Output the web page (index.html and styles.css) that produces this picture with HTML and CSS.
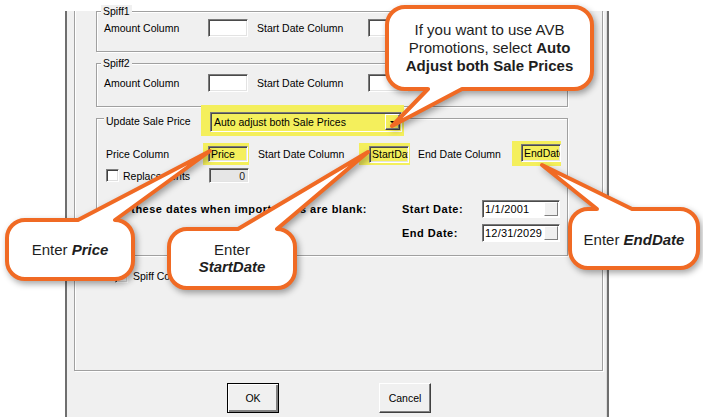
FILE: index.html
```html
<!DOCTYPE html>
<html lang="en">
<head>
  <meta charset="UTF-8" />
  <title>Import Settings</title>
  <link rel="stylesheet" href="styles.css">
</head>
<body>
  <div class="dialog">
    <div class="frame">
      <div class="group spiff1">
        <div class="legend">Spiff1</div>
        <div class="row">
          <span class="lbl lbl-amount">Amount Column</span>
          <span class="field"></span>
          <span class="lbl lbl-sdc">Start Date Column</span>
          <span class="field"></span>
        </div>
      </div>

      <div class="group spiff2">
        <div class="legend">Spiff2</div>
        <div class="row">
          <span class="lbl lbl-amount">Amount Column</span>
          <span class="field"></span>
          <span class="lbl lbl-sdc">Start Date Column</span>
          <span class="field"></span>
        </div>
      </div>

      <div class="group update">
        <div class="head">
          <div class="legend">Update Sale Price</div>
          <div class="hl hl-combo">
            <div class="combo">
              <span class="combo-text">Auto adjust both Sale Prices</span>
              <span class="combo-btn"><span class="arrow"></span></span>
            </div>
          </div>
        </div>

        <div class="row row2">
          <span class="lbl lbl-price">Price Column</span>
          <div class="hl hl-price"><span class="field in-hl f16">Price</span></div>
          <span class="lbl lbl-start">Start Date Column</span>
          <div class="hl hl-start"><span class="field in-hl f17">StartDate</span></div>
          <span class="lbl lbl-end">End Date Column</span>
          <div class="hl hl-end"><span class="field in-hl">EndDate</span></div>
        </div>

        <div class="row row3">
          <span class="check"></span>
          <span class="lbl lbl-repl">Replacements</span>
          <span class="field field-off">0</span>
        </div>

        <div class="dates">
          <span>Use these dates when import dates are blank:</span>
          <span>Start Date:</span>
          <div class="date"><span>1/1/2001</span><span class="pick"></span></div>
          <span></span>
          <span>End Date:</span>
          <div class="date"><span>12/31/2029</span><span class="pick"></span></div>
        </div>
      </div>

      <div class="row spiffcol">
        <span class="check"></span>
        <span class="lbl">Spiff Columns</span>
      </div>
    </div>

    <div class="buttons">
      <button class="btn btn-default">OK</button>
      <button class="btn">Cancel</button>
    </div>
  </div>

  <!-- callouts drawn over the screenshot -->
  <div class="notes">
    <svg width="703" height="417" viewBox="0 0 703 417">
      <g class="bubble">
        <path d="M405,7 H574 A18,18 0 0 1 592,25 V71 A18,18 0 0 1 574,89 H462 L392,126 L428,89 H405 A18,18 0 0 1 387,71 V25 A18,18 0 0 1 405,7 Z" />
        <path d="M25,220 H78 L210,151 L115,220 A18,18 0 0 1 133,238 V261 A18,18 0 0 1 115,279 H25 A18,18 0 0 1 7,261 V238 A18,18 0 0 1 25,220 Z" />
        <path d="M187,229 H238 L368,152 L277,229 A18,18 0 0 1 295,247 V270 A18,18 0 0 1 277,288 H187 A18,18 0 0 1 169,270 V247 A18,18 0 0 1 187,229 Z" />
        <path d="M588,209 H597 L542,165 L632,209 H680 A18,18 0 0 1 698,227 V250 A18,18 0 0 1 680,268 H588 A18,18 0 0 1 570,250 V227 A18,18 0 0 1 588,209 Z" />
      </g>
    </svg>
    <div class="note note-avb">If you want to use AVB<br>Promotions, select <b>Auto<br>Adjust both Sale Prices</b></div>
    <div class="note note-price">Enter <b><i>Price</i></b></div>
    <div class="note note-start">Enter<br><b><i>StartDate</i></b></div>
    <div class="note note-end">Enter <b><i>EndDate</i></b></div>
  </div>
</body>
</html>
```

FILE: styles.css
```css
html, body {
  margin: 0;
  padding: 0;
  width: 100%;
  height: 100%;
  overflow: hidden;
  background: #fff;
  font-family: "Liberation Sans", Arial, sans-serif;
  font-size: 10.5px;
  color: #000;
}
body { position: relative; }
* { box-sizing: border-box; }

/* dialog window */
.dialog {
  margin-left: 65px;
  width: 544px;
  height: 417px;
  background: #f0f0f0;
  border: 2px solid #6f6f6f;
  border-top: 0;
  box-shadow: inset -1px -1px 0 #dcdcdc;
}

.frame {
  margin-left: 7px;
  width: 529px;
  height: 360px;
  border: 1px solid #a0a0a0;
  border-top: 0;
  box-shadow: 1px 1px 0 #fff, inset 1px 0 0 #fff;
}

.group {
  margin: 11px 0 0 21px;
  width: 472px;
  border: 1px solid #a0a0a0;
  box-shadow: 1px 1px 0 #fff, inset 1px 1px 0 #fff;
  padding: 0 0 14px 7px;
}

.legend {
  width: max-content;
  margin: -7px 0 0 -3px;
  padding: 0 2px;
  line-height: 12px;
  background: #f0f0f0;
}

.row {
  display: flex;
  align-items: center;
}
.spiff1 .row { margin-top: 2px; }
.spiff2 .row { margin-top: 5px; }

.lbl {
  flex: none;
  line-height: 12px;
  white-space: nowrap;
}
.lbl-amount { width: 104px; }
.lbl-sdc { margin-left: 9px; width: 111px; }

.field {
  flex: none;
  display: block;
  width: 40px;
  height: 18px;
  background: #fff;
  border: 1px solid;
  border-color: #7a7a7a #fff #fff #7a7a7a;
  box-shadow: inset 1px 1px 0 #4a4a4a, inset -1px -1px 0 #e3e3e3;
  overflow: hidden;
  white-space: nowrap;
  padding: 2px 0 0 2px;
  line-height: 12px;
}

/* update sale price */
.update { padding: 0 0 13px 9px; }

.head {
  display: flex;
  align-items: center;
  margin: -14px 0 0 -2px;
}
.head .legend {
  margin: 0;
  width: 97px;
}

.hl {
  flex: none;
  background: #f4ef5c;
}
.hl-combo { padding: 7px 2px 4px 9px; }
.hl-price { padding: 3px 1px 3px 5px; }
.hl-start { padding: 3px 1px 2px 10px; }
.hl-end { padding: 3px 0 4px 9px; }

.in-hl { background: transparent; }
.f16 { height: 16px; padding-top: 1px; }
.f17 { height: 17px; padding-top: 1px; }

.combo {
  display: flex;
  align-items: center;
  width: 192px;
  height: 20px;
  border: 1px solid;
  border-color: #7a7a7a #fff #fff #7a7a7a;
  box-shadow: inset 1px 1px 0 #4a4a4a;
  padding: 0 1px 0 3px;
}
.combo-text { flex: 1; }
.combo-btn {
  width: 15px;
  height: 16px;
  display: flex;
  align-items: center;
  justify-content: center;
  border: 1px solid;
  border-color: #fff #404040 #404040 #fff;
  box-shadow: inset -1px -1px 0 #808080;
}
.arrow {
  width: 0;
  height: 0;
  border-left: 3px solid transparent;
  border-right: 3px solid transparent;
  border-top: 3px solid #000;
}

.row2 { margin-top: 5px; height: 25px; }
.lbl-price { width: 97px; }
.lbl-start { margin-left: 9px; width: 101px; }
.lbl-end { margin-left: 8px; width: 94px; }

.row3 { margin-top: 2px; height: 15px; }
.check {
  flex: none;
  width: 13px;
  height: 13px;
  background: #fff;
  border: 1px solid;
  border-color: #808080 #fff #fff #808080;
  box-shadow: inset 1px 1px 0 #404040, inset -1px -1px 0 #dfdfdf;
}
.lbl-repl { margin-left: 4px; width: 86px; }
.field-off {
  height: 15px;
  background: #e6e6e6;
  text-align: right;
  padding: 1px 3px 0 0;
  color: #222;
}

.dates {
  display: grid;
  grid-template-columns: 296px 80px 78px;
  grid-auto-rows: 18px;
  row-gap: 6px;
  align-items: center;
  margin-top: 17px;
  font-size: 11px;
  font-weight: bold;
  letter-spacing: 0.5px;
}
.date {
  display: flex;
  align-items: center;
  height: 18px;
  background: #fff;
  border: 1px solid;
  border-color: #7a7a7a #fff #fff #7a7a7a;
  box-shadow: inset 1px 1px 0 #4a4a4a;
  padding-left: 2px;
  font-weight: normal;
  letter-spacing: 0.2px;
}
.pick {
  margin-left: auto;
  margin-right: 1px;
  width: 14px;
  height: 14px;
  background: #f0f0f0;
  border: 1px solid;
  border-color: #fff #808080 #808080 #fff;
}

.spiffcol {
  margin: 13px 0 0 40px;
  height: 14px;
}
.spiffcol .lbl { margin-left: 5px; }

/* buttons */
.buttons {
  display: flex;
  gap: 100px;
  padding-left: 160px;
  margin-top: 12px;
}
.btn {
  width: 52px;
  height: 30px;
  padding: 0;
  font: 10.5px "Liberation Sans", Arial, sans-serif;
  color: #000;
  background: #f0f0f0;
  border: 1px solid;
  border-color: #fff #404040 #404040 #fff;
  box-shadow: inset -1px -1px 0 #808080;
}
.btn-default {
  border: 1px solid #000;
  box-shadow: inset 1px 1px 0 #fff, inset -2px -2px 0 #808080;
}

/* callouts */
.notes {
  position: absolute;
  top: 0;
  left: 0;
  width: 703px;
  height: 417px;
  pointer-events: none;
}
.notes svg {
  position: absolute;
  top: 0;
  left: 0;
  filter: drop-shadow(2px 3px 3px rgba(0, 0, 0, 0.35));
}
.bubble path {
  fill: #fff;
  stroke: #f06a24;
  stroke-width: 4;
  stroke-linejoin: round;
}
.note {
  position: absolute;
  text-align: center;
  font: 15px/18px "Liberation Sans", Arial, sans-serif;
  color: #1e1e1e;
}
.note-avb { left: 387px; width: 205px; top: 21px; }
.note-price { left: 7px; width: 126px; top: 241px; }
.note-start { left: 169px; width: 126px; top: 241px; line-height: 17px; }
.note-end { left: 570px; width: 128px; top: 231px; }
```
